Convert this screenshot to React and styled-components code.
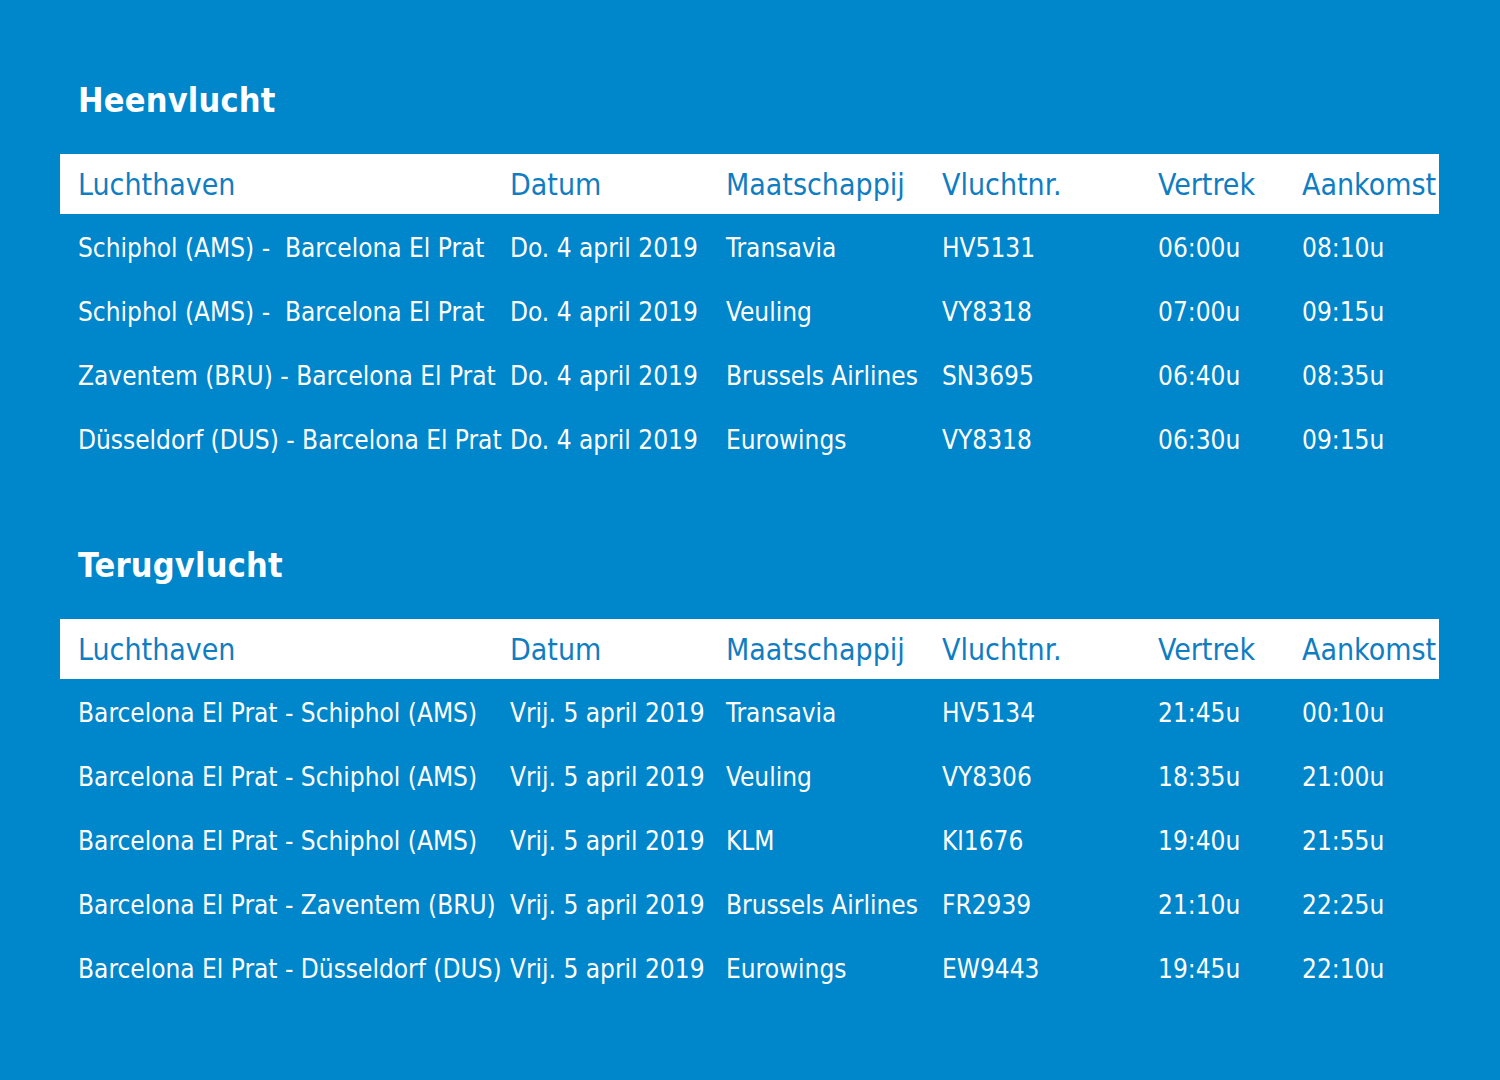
import React from "react";
import styled, { createGlobalStyle } from "styled-components";

const Global = createGlobalStyle`
  html, body { margin: 0; padding: 0; background: #0086cb; }
  body { font-family: "Liberation Sans Narrow", "DejaVu Sans Condensed", "Roboto Condensed", sans-serif; }
`;

const Page = styled.div`
  width: 1500px; height: 1080px; background: #0086cb; box-sizing: border-box;
  padding: 80px 61px 0 60px; display: flex; flex-direction: column; gap: 73px;
`;
const Section = styled.section`display: flex; flex-direction: column;`;
const Title = styled.h2`
  margin: 0 0 34px 18px; height: 40px; line-height: 40px; color: #fff;
  font-size: 34px; font-weight: 700; letter-spacing: 0.2px;
`;
const Grid = styled.div`
  display: grid; grid-template-columns: 432px 216px 216px 216px 144px 1fr;
  padding-left: 18px; align-items: center;
`;
const Head = styled(Grid)`
  background: #fff; height: 60px; color: #0f7dc2; font-size: 30px;
`;
const Row = styled(Grid)`
  height: 64px; color: #fff; font-size: 26px;
  &:first-of-type { margin-top: 2px; }
`;
const Cell = styled.div`white-space: pre;`;

const cols = ["Luchthaven", "Datum", "Maatschappij", "Vluchtnr.", "Vertrek", "Aankomst"];
const out = [
  ["Schiphol (AMS) -  Barcelona El Prat", "Do. 4 april 2019", "Transavia", "HV5131", "06:00u", "08:10u"],
  ["Schiphol (AMS) -  Barcelona El Prat", "Do. 4 april 2019", "Veuling", "VY8318", "07:00u", "09:15u"],
  ["Zaventem (BRU) - Barcelona El Prat", "Do. 4 april 2019", "Brussels Airlines", "SN3695", "06:40u", "08:35u"],
  ["Düsseldorf (DUS) - Barcelona El Prat", "Do. 4 april 2019", "Eurowings", "VY8318", "06:30u", "09:15u"],
];
const back = [
  ["Barcelona El Prat - Schiphol (AMS)", "Vrij. 5 april 2019", "Transavia", "HV5134", "21:45u", "00:10u"],
  ["Barcelona El Prat - Schiphol (AMS)", "Vrij. 5 april 2019", "Veuling", "VY8306", "18:35u", "21:00u"],
  ["Barcelona El Prat - Schiphol (AMS)", "Vrij. 5 april 2019", "KLM", "Kl1676", "19:40u", "21:55u"],
  ["Barcelona El Prat - Zaventem (BRU)", "Vrij. 5 april 2019", "Brussels Airlines", "FR2939", "21:10u", "22:25u"],
  ["Barcelona El Prat - Düsseldorf (DUS)", "Vrij. 5 april 2019", "Eurowings", "EW9443", "19:45u", "22:10u"],
];

const Table = ({ title, rows }) => (
  <Section>
    <Title>{title}</Title>
    <Head>{cols.map((c) => <Cell key={c}>{c}</Cell>)}</Head>
    <div>
      {rows.map((r, i) => (
        <Row key={i}>{r.map((c, j) => <Cell key={j}>{c}</Cell>)}</Row>
      ))}
    </div>
  </Section>
);

export default function App() {
  return (
    <>
      <Global />
      <Page>
        <Table title="Heenvlucht" rows={out} />
        <Table title="Terugvlucht" rows={back} />
      </Page>
    </>
  );
}
